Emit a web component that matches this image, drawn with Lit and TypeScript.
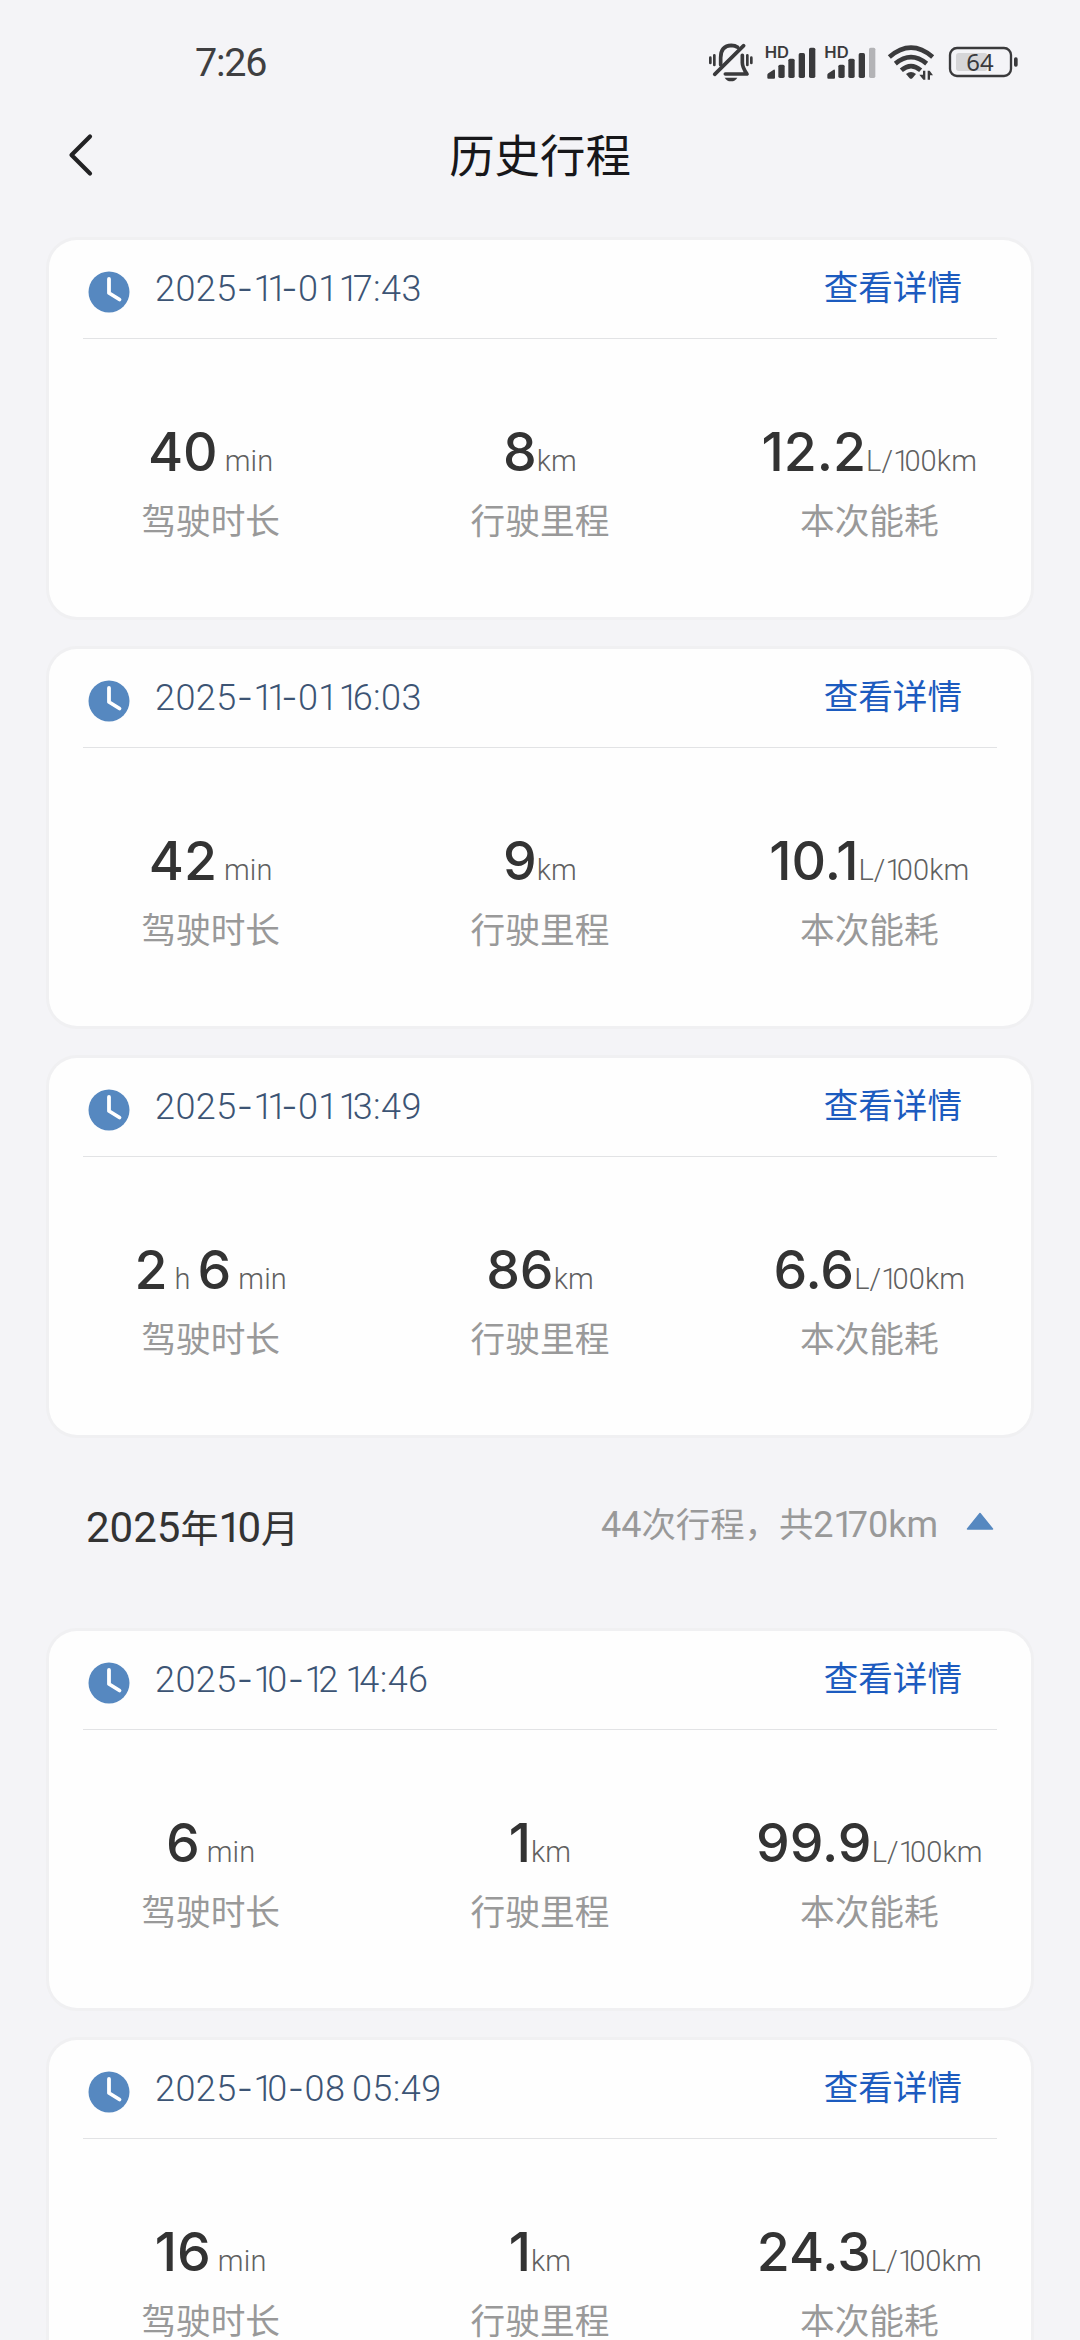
import { LitElement, html, css, svg } from "lit";
import { customElement, property } from "lit/decorators.js";

interface Quantity {
  value: string;
  unit: string;
}

interface Trip {
  start: string;
  duration: Quantity[];
  distance: string;
  consumption: string;
}

const november: Trip[] = [
  { start: "2025-11-01 17:43", duration: [{ value: "40", unit: "min" }], distance: "8", consumption: "12.2" },
  { start: "2025-11-01 16:03", duration: [{ value: "42", unit: "min" }], distance: "9", consumption: "10.1" },
  { start: "2025-11-01 13:49", duration: [{ value: "2", unit: "h" }, { value: "6", unit: "min" }], distance: "86", consumption: "6.6" },
];

const october: Trip[] = [
  { start: "2025-10-12 14:46", duration: [{ value: "6", unit: "min" }], distance: "1", consumption: "99.9" },
  { start: "2025-10-08 05:49", duration: [{ value: "16", unit: "min" }], distance: "1", consumption: "24.3" },
];

/* Numerals are set with a narrow "1", a long hyphen and slightly smaller Han characters. */
const numerals = (text: string) =>
  (text.match(/1|-| |[\u3000-\u9fff\uff00-\uffef]+|[^1\- \u3000-\u9fff\uff00-\uffef]+/g) ?? []).map((part) => {
    if (part === "1") return html`<span class="one">1</span>`;
    if (part === "-") return html`<span class="dash">-</span>`;
    if (part === " ") return html`<span class="gap"> </span>`;
    if (/[\u3000-\uffef]/.test(part)) return html`<span class="han">${part}</span>`;
    return part;
  });

const numeralStyles = css`
  .one { letter-spacing: -0.17em; }
  .dash { font-family: Inter, sans-serif; line-height: 0; }
  .gap { letter-spacing: -0.06em; white-space: pre; }
  .han { font-family: "Noto Sans CJK SC", sans-serif; font-size: 0.955em; line-height: 0; }
`;

@customElement("status-bar")
class StatusBar extends LitElement {
  static styles = css`
    :host {
      display: flex;
      justify-content: space-between;
      box-sizing: border-box;
      height: 110px;
      padding: 30px 40px 0 195px;
      color: #3f3f41;
    }
    .time {
      margin-top: 8px;
      height: 50px;
      font: 400 39.5px/50px Roboto, sans-serif;
      letter-spacing: -1.2px;
    }
    .icons { width: 350px; height: 70px; display: block; }
    .hd { font: 600 46px Inter, sans-serif; }
    .level { font: 400 71px "Noto Sans", sans-serif; }
  `;

  render() {
    const bars = (x: number, lastOpacity: number) => svg`
      <path d="M${x} 143v-8q0-3 3-5l16-11q4-1 4 4v20q0 3-3 3h-17q-3 0-3-3z" />
      <rect x=${x + 33} y="104" width="19" height="40" rx="5" />
      <rect x=${x + 63} y="86" width="19" height="58" rx="5" />
      <rect x=${x + 94} y="69" width="19" height="75" rx="5" />
      <rect x=${x + 125} y="53" width="19" height="91" rx="5" opacity=${lastOpacity} />`;
    return html`
      <div class="time">7:26</div>
      <svg class="icons" viewBox="0 0 1050 210" fill="#3a3a3c">
        <g fill="none" stroke="#3a3a3c" stroke-width="11" stroke-linecap="round" stroke-linejoin="round">
          <path d="M61 83v16M73 76v29M172 76v29M184 83v16" stroke-width="8" />
          <path d="M92 104V83q0-36 32-37q11 0 19 6" />
          <path d="M157 76V98q0 14 14 34H106" />
          <path d="M74 133L161 47" />
        </g>
        <path d="M104 143h38q-6 11-19 11t-19-11z" />
        <text class="hd" x="224" y="84" textLength="73" lengthAdjust="spacingAndGlyphs">HD</text>
        ${bars(232, 1)}
        <text class="hd" x="403" y="84" textLength="73" lengthAdjust="spacingAndGlyphs">HD</text>
        ${bars(412, 0.35)}
        <g fill="none" stroke="#3a3a3c" stroke-width="14">
          <path d="M598 81Q663 25 728 81" />
          <path d="M616 101Q663 62 710 101" />
          <path d="M634 121Q663 96 692 121" />
        </g>
        <path d="M648 132q15-12 30 0l-11 13q-4 3-8 0z" />
        <path d="M699 122h7v27h-6l-12-15h11zM713 149v-27h6l10 14h-9v13z" stroke="#f4f4f7" stroke-width="3" paint-order="stroke" />
        <rect x="798" y="69" width="94" height="54" rx="8" fill="#d6d6d8" />
        <rect x="780" y="54" width="183" height="84" rx="21" fill="none" stroke="#3a3a3c" stroke-width="7" />
        <rect x="972" y="82" width="11" height="28" rx="5" />
        <text class="level" x="829" y="122" textLength="82" lengthAdjust="spacingAndGlyphs">64</text>
      </svg>
    `;
  }
}

@customElement("page-header")
class PageHeader extends LitElement {
  static styles = css`
    :host {
      display: grid;
      grid-template-columns: 100px 1fr 100px;
      height: 90px;
    }
    .back { width: 30px; height: 48px; margin: 21px 0 0 66px; }
    .title {
      margin: 13px 0 0;
      text-align: center;
      color: #17171a;
      font: 400 45.4px/60px "Noto Sans CJK SC", sans-serif;
    }
  `;

  render() {
    return html`
      <svg class="back" viewBox="0 0 30 48" fill="none" stroke="#222224" stroke-width="4.2"
        stroke-linecap="round" stroke-linejoin="round">
        <path d="M24 5.500L5.500 24L24 42.500" />
      </svg>
      <h1 class="title">历史行程</h1>
    `;
  }
}

@customElement("trip-card")
class TripCard extends LitElement {
  @property({ attribute: false }) trip!: Trip;

  static styles = [
    numeralStyles,
    css`
      :host {
        display: block;
        flex: none;
        height: 377px;
        border-radius: 28px;
        background: #fefefe;
        box-shadow: 0 0 0 3px #f0f0f2;
      }
      .head {
        display: flex;
        align-items: flex-start;
        box-sizing: border-box;
        height: 99px;
        margin: 0 34px;
        padding: 0 35px 0 5px;
        border-bottom: 1px solid #e2e3e5;
      }
      .clock { width: 42px; height: 42px; margin-top: 31px; }
      .start {
        flex: 1;
        height: 40px;
        margin: 29px 0 0 25px;
        color: #3c5474;
        font: 350 36px/40px Roboto, sans-serif;
        letter-spacing: 0.45px;
        white-space: nowrap;
      }
      .details {
        margin-top: 25px;
        color: #1c5bbf;
        font: 400 34.6px/40px "Noto Sans CJK SC", sans-serif;
      }
      .stats {
        display: grid;
        grid-template-columns: repeat(3, 1fr);
        margin: 81px -3px 0;
        text-align: center;
      }
      .figure {
        height: 64px;
        color: #333;
        font: 550 53.6px/64px Inter, sans-serif;
        letter-spacing: 0;
        white-space: nowrap;
      }
      .unit {
        color: #606060;
        font-family: Roboto, sans-serif;
        font-size: 29px;
        font-weight: 300;
        line-height: 0;
        letter-spacing: 0.15px;
      }
      .apart { margin-left: 7px; }
      .next { margin-left: 7px; }
      .label {
        height: 40px;
        margin-top: 15px;
        color: #999;
        font: 400 34.7px/40px "Noto Sans CJK SC", sans-serif;
      }
    `,
  ];

  render() {
    const { start, duration, distance, consumption } = this.trip;
    return html`
      <div class="head">
        <svg class="clock" viewBox="0 0 42 42">
          <circle cx="21" cy="21" r="20.500" fill="#5688c0" />
          <path d="M21 8V22L31.500 28.500" fill="none" stroke="#fff" stroke-width="3.800"
            stroke-linecap="round" stroke-linejoin="round" />
        </svg>
        <div class="start">${numerals(start)}</div>
        <div class="details">查看详情</div>
      </div>
      <div class="stats">
        <div>
          <div class="figure">${duration.map(
            (q, i) => html`<span class=${i ? "next" : "first"}>${q.value}</span><span class="unit apart">${q.unit}</span>`
          )}</div>
          <div class="label">驾驶时长</div>
        </div>
        <div>
          <div class="figure">${distance}<span class="unit">km</span></div>
          <div class="label">行驶里程</div>
        </div>
        <div>
          <div class="figure">${consumption}<span class="unit">${numerals("L/100km")}</span></div>
          <div class="label">本次能耗</div>
        </div>
      </div>
    `;
  }
}

@customElement("month-row")
class MonthRow extends LitElement {
  @property() month = "";
  @property() summary = "";

  static styles = [
    numeralStyles,
    css`
      :host {
        display: flex;
        align-items: flex-start;
        flex: none;
        height: 196px;
        padding: 0 37px 0 37px;
        white-space: nowrap;
      }
      .month {
        flex: 1;
        height: 50px;
        margin-top: 68px;
        color: #333;
        font: 400 42px/50px Roboto, sans-serif;
      }
      .month .han { font-size: 38px; }
      .month .one { letter-spacing: -0.11em; }
      .summary {
        height: 40px;
        margin-top: 70px;
        color: #999;
        font: 400 36px/40px Roboto, sans-serif;
      }
      .arrow { width: 28px; height: 18px; margin: 77px 0 0 28px; }
    `,
  ];

  render() {
    return html`
      <div class="month">${numerals(this.month)}</div>
      <div class="summary">${numerals(this.summary)}</div>
      <svg class="arrow" viewBox="0 0 28 18">
        <path d="M14 1.500L26.500 17H1.500z" fill="#5688c0" stroke="#5688c0" stroke-width="1.500" stroke-linejoin="round" />
      </svg>
    `;
  }
}

@customElement("app-root")
class AppRoot extends LitElement {
  static styles = css`
    :host {
      display: block;
      height: 2340px;
      overflow: hidden;
      background: #f4f4f7;
    }
    .list {
      display: flex;
      flex-direction: column;
      padding: 40px 49px 0;
    }
    .group { display: flex; flex-direction: column; gap: 32px; }
  `;

  render() {
    const group = (trips: Trip[]) =>
      html`<div class="group">${trips.map((trip) => html`<trip-card .trip=${trip}></trip-card>`)}</div>`;
    return html`
      <status-bar></status-bar>
      <page-header></page-header>
      <div class="list">
        ${group(november)}
        <month-row month="2025年10月" summary="44次行程，共2170km"></month-row>
        ${group(october)}
      </div>
    `;
  }
}
